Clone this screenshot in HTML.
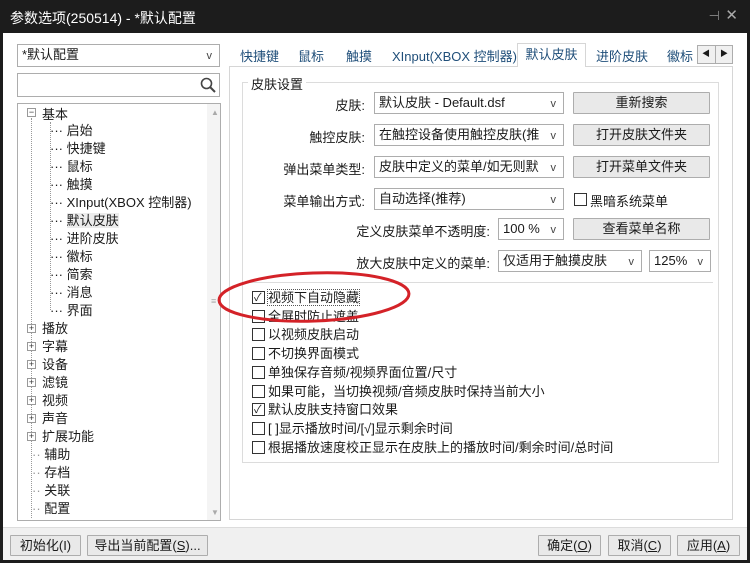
<!DOCTYPE html>
<html><head><meta charset="utf-8"><style>
*{margin:0;padding:0;box-sizing:border-box}
body{width:750px;height:563px;background:#1c1c1c;font-family:"Liberation Sans","Noto Sans CJK SC",sans-serif;font-size:13px;color:#1a1a1a;position:relative;overflow:hidden}
.a{position:absolute;white-space:nowrap}
.title{left:10px;top:8px;color:#fff;font-size:14px}
.win{left:3px;top:33px;width:744px;height:527px;background:#fff}
.bot{left:3px;top:527px;width:744px;height:33px;background:#f0f0f0;border-top:1px solid #dcdcdc}
.box{border:1px solid #adadad;background:#fff}
.cb{border:1px solid #adadad;background:#fff;padding:2px 4px;line-height:16px}
.cb:after{content:"v";position:absolute;right:7px;top:3px;font-size:11px;color:#444}
.btn{border:1px solid #adadad;background:#e9e9e9;text-align:center;line-height:20px;border-radius:1px}
.lbl{text-align:right}
.ck{width:13px;height:13px;border:1px solid #333;background:#fff}
.tr{font-size:13px}
.pm{width:9px;height:9px;border:1px solid #999;font-size:9px;line-height:7px;text-align:center;color:#333;background:#fff}
</style></head><body>
<div class="a title">参数选项(250514) - *默认配置</div>
<div class="a" style="right:30px;top:8px;color:#888;font-size:13px">⊣</div>
<div class="a" style="right:12px;top:6px;color:#aaa;font-size:15px">✕</div>
<div class="a win"></div>
<div class="a bot"></div>

<div class="a cb" style="left:17px;top:44px;width:203px;height:23px">*默认配置</div>
<div class="a box" style="left:17px;top:73px;width:203px;height:24px"></div>
<svg class="a" style="left:200px;top:77px" width="16" height="16"><circle cx="6.5" cy="6.5" r="5" fill="none" stroke="#444" stroke-width="1.6"/><line x1="10" y1="10" x2="15" y2="15" stroke="#444" stroke-width="2"/></svg>

<div class="a box" style="left:17px;top:103px;width:204px;height:418px"></div>
<div class="a" style="left:207px;top:104px;width:13px;height:416px;background:#f4f4f4"></div>
<div class="a" style="left:211px;top:108px;font-size:8px;color:#aaa">▲</div>
<div class="a" style="left:211px;top:296px;font-size:9px;color:#aaa">≡</div>
<div class="a" style="left:211px;top:508px;font-size:8px;color:#aaa">▼</div>
<!-- tree lines -->
<div class="a" style="left:31px;top:118px;height:400px;border-left:1px dotted #999"></div>
<div class="a" style="left:50px;top:122px;height:188px;border-left:1px dotted #999"></div>
<div class="a pm" style="left:27px;top:108px">−</div>
<div class="a tr" style="left:42px;top:104px">基本</div>
<div class="a tr" style="left:50px;top:122px;line-height:18px">
<div>··· 启始</div><div>··· 快捷键</div><div>··· 鼠标</div><div>··· 触摸</div><div>··· XInput(XBOX 控制器)</div><div>··· <span style="background:#ececec">默认皮肤</span></div><div>··· 进阶皮肤</div><div>··· 徽标</div><div>··· 简索</div><div>··· 消息</div><div>··· 界面</div></div>
<div class="a tr" style="left:42px;top:320px;line-height:18px">
<div>播放</div><div>字幕</div><div>设备</div><div>滤镜</div><div>视频</div><div>声音</div><div>扩展功能</div></div>
<div class="a" style="left:27px;top:324px;line-height:18px">
<div class="pm" style="margin-bottom:9px">+</div><div class="pm" style="margin-bottom:9px">+</div><div class="pm" style="margin-bottom:9px">+</div><div class="pm" style="margin-bottom:9px">+</div><div class="pm" style="margin-bottom:9px">+</div><div class="pm" style="margin-bottom:9px">+</div><div class="pm">+</div></div>
<div class="a tr" style="left:32px;top:446px;line-height:18px;color:#999">
<div>··<span style="color:#1a1a1a"> 辅助</span></div><div>··<span style="color:#1a1a1a"> 存档</span></div><div>··<span style="color:#1a1a1a"> 关联</span></div><div>··<span style="color:#1a1a1a"> 配置</span></div></div>

<!-- tabs -->
<div class="a" style="left:229px;top:66px;width:504px;height:454px;border:1px solid #d6d6d6;background:#fff"></div>
<div class="a" style="left:240px;top:46px;color:#1f4e79">快捷键</div>
<div class="a" style="left:298px;top:46px;color:#1f4e79">鼠标</div>
<div class="a" style="left:346px;top:46px;color:#1f4e79">触摸</div>
<div class="a" style="left:392px;top:46px;color:#1f4e79">XInput(XBOX 控制器)</div>
<div class="a" style="left:517px;top:43px;width:69px;height:24px;border:1px solid #d6d6d6;border-bottom:none;background:#fff;text-align:center;line-height:22px;color:#1f4e79">默认皮肤</div>
<div class="a" style="left:596px;top:46px;color:#1f4e79">进阶皮肤</div>
<div class="a" style="left:667px;top:46px;color:#1f4e79">徽标</div>
<div class="a box" style="left:697px;top:45px;width:36px;height:19px;background:#f0f0f0"></div>
<div class="a" style="left:715px;top:45px;width:1px;height:19px;background:#adadad"></div>
<div class="a" style="left:702px;top:48px;font-size:8px">◀</div>
<div class="a" style="left:720px;top:48px;font-size:8px">▶</div>

<!-- groupbox -->
<div class="a" style="left:242px;top:82px;width:477px;height:381px;border:1px solid #dcdcdc"></div>
<div class="a" style="left:248px;top:74px;background:#fff;padding:0 3px">皮肤设置</div>
<div class="a lbl" style="left:250px;top:95px;width:115px">皮肤:</div>
<div class="a cb" style="left:374px;top:92px;width:190px;height:22px">默认皮肤 - Default.dsf</div>
<div class="a btn" style="left:573px;top:92px;width:137px;height:22px">重新搜索</div>
<div class="a lbl" style="left:250px;top:127px;width:115px">触控皮肤:</div>
<div class="a cb" style="left:374px;top:124px;width:190px;height:22px">在触控设备使用触控皮肤(推</div>
<div class="a btn" style="left:573px;top:124px;width:137px;height:22px">打开皮肤文件夹</div>
<div class="a lbl" style="left:250px;top:159px;width:115px">弹出菜单类型:</div>
<div class="a cb" style="left:374px;top:156px;width:190px;height:22px">皮肤中定义的菜单/如无则默</div>
<div class="a btn" style="left:573px;top:156px;width:137px;height:22px">打开菜单文件夹</div>
<div class="a lbl" style="left:250px;top:191px;width:115px">菜单输出方式:</div>
<div class="a cb" style="left:374px;top:188px;width:190px;height:22px">自动选择(推荐)</div>
<div class="a ck" style="left:574px;top:193px"></div>
<div class="a" style="left:590px;top:191px">黑暗系统菜单</div>
<div class="a lbl" style="left:300px;top:221px;width:190px">定义皮肤菜单不透明度:</div>
<div class="a cb" style="left:498px;top:218px;width:66px;height:22px">100 %</div>
<div class="a btn" style="left:573px;top:218px;width:137px;height:22px">查看菜单名称</div>
<div class="a lbl" style="left:300px;top:253px;width:190px">放大皮肤中定义的菜单:</div>
<div class="a cb" style="left:498px;top:250px;width:144px;height:22px">仅适用于触摸皮肤</div>
<div class="a cb" style="left:649px;top:250px;width:62px;height:22px">125%</div>
<div class="a" style="left:247px;top:282px;width:466px;height:1px;background:#dcdcdc"></div>

<div class="a" style="left:252px;top:289px;line-height:18.7px">
<div><span class="ck" style="display:inline-block;vertical-align:-2px;margin-right:3px;position:relative"><span style="position:absolute;left:1px;top:-3px;font-size:11px">✓</span></span><span style="outline:1px dotted #555">视频下自动隐藏</span></div>
<div><span class="ck" style="display:inline-block;vertical-align:-2px;margin-right:3px"></span>全屏时防止遮盖</div>
<div><span class="ck" style="display:inline-block;vertical-align:-2px;margin-right:3px"></span>以视频皮肤启动</div>
<div><span class="ck" style="display:inline-block;vertical-align:-2px;margin-right:3px"></span>不切换界面模式</div>
<div><span class="ck" style="display:inline-block;vertical-align:-2px;margin-right:3px"></span>单独保存音频/视频界面位置/尺寸</div>
<div><span class="ck" style="display:inline-block;vertical-align:-2px;margin-right:3px"></span>如果可能，当切换视频/音频皮肤时保持当前大小</div>
<div><span class="ck" style="display:inline-block;vertical-align:-2px;margin-right:3px;position:relative"><span style="position:absolute;left:1px;top:-3px;font-size:11px">✓</span></span>默认皮肤支持窗口效果</div>
<div><span class="ck" style="display:inline-block;vertical-align:-2px;margin-right:3px"></span>[ ]显示播放时间/[√]显示剩余时间</div>
<div><span class="ck" style="display:inline-block;vertical-align:-2px;margin-right:3px"></span>根据播放速度校正显示在皮肤上的播放时间/剩余时间/总时间</div>
</div>

<svg class="a" style="left:0;top:0" width="750" height="563"><ellipse cx="314" cy="297" rx="95" ry="24" fill="none" stroke="#d42228" stroke-width="3" transform="rotate(-2 314 297)"/></svg>

<div class="a btn" style="left:10px;top:535px;width:71px;height:21px">初始化(I)</div>
<div class="a btn" style="left:87px;top:535px;width:121px;height:21px">导出当前配置(<u>S</u>)...</div>
<div class="a btn" style="left:538px;top:535px;width:63px;height:21px">确定(<u>O</u>)</div>
<div class="a btn" style="left:608px;top:535px;width:63px;height:21px">取消(<u>C</u>)</div>
<div class="a btn" style="left:677px;top:535px;width:63px;height:21px">应用(<u>A</u>)</div>
</body></html>
